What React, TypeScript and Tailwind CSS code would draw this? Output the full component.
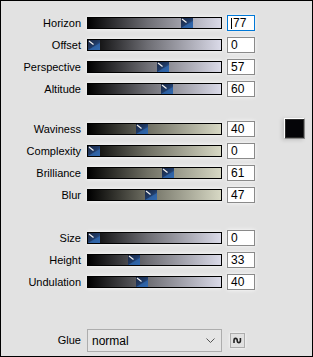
import React from "react";

type Row = { label: string; value: number; tone: "cool" | "warm"; focused?: boolean };

const group1: Row[] = [
  { label: "Horizon", value: 77, tone: "cool", focused: true },
  { label: "Offset", value: 0, tone: "cool" },
  { label: "Perspective", value: 57, tone: "cool" },
  { label: "Altitude", value: 60, tone: "cool" },
];

const group2: Row[] = [
  { label: "Waviness", value: 40, tone: "warm" },
  { label: "Complexity", value: 0, tone: "warm" },
  { label: "Brilliance", value: 61, tone: "warm" },
  { label: "Blur", value: 47, tone: "warm" },
];

const group3: Row[] = [
  { label: "Size", value: 0, tone: "cool" },
  { label: "Height", value: 33, tone: "cool" },
  { label: "Undulation", value: 40, tone: "cool" },
];

function Thumb({ value }: { value: number }) {
  // inner track is 133px wide, thumb 12px
  const left = Math.round((value / 100) * 121);
  return (
    <svg
      className="absolute top-0"
      style={{ left }}
      width="12"
      height="10"
      viewBox="0 0 12 10"
    >
      <defs>
        <linearGradient id="thumbFill" x1="0" y1="0" x2="1" y2="1">
          <stop offset="0" stopColor="#1a2640" />
          <stop offset="0.5" stopColor="#1f3a66" />
          <stop offset="1" stopColor="#3a74bc" />
        </linearGradient>
      </defs>
      <rect x="0" y="0" width="12" height="10" fill="url(#thumbFill)" />
      <polygon points="0,10 12,10 12,3" fill="#2f66ad" opacity="0.8" />
      <line x1="1" y1="1" x2="5.5" y2="4.5" stroke="#f2f2f2" strokeWidth="1.2" />
    </svg>
  );
}

function SliderRow({ row, extra }: { row: Row; extra?: React.ReactNode }) {
  const track =
    row.tone === "cool"
      ? "bg-[linear-gradient(to_right,#000000,#6e6e74_45%,#dadae8)]"
      : "bg-[linear-gradient(to_right,#000000,#707064_45%,#d7d8c4)]";
  return (
    <div className="flex h-[22px] items-center">
      <div className="w-[80px] text-right text-[11px] leading-none text-black">{row.label}</div>
      <div className={`relative ml-[6px] h-[12px] w-[135px] border border-black shadow-[0_0_4px_rgba(255,255,255,0.9)] ${track}`}>
        <Thumb value={row.value} />
      </div>
      <div
        className={`ml-[5px] flex h-[16px] w-[28px] items-center bg-white pl-[3px] text-[12px] leading-none text-black shadow-[0_0_4px_rgba(255,255,255,0.9)] ${
          row.focused ? "border border-[#0078d7]" : "border border-[#8a8a8a]"
        }`}
      >
        {row.focused && <span className="mr-[1px] h-[11px] w-px bg-black" />}
        {row.value}
      </div>
      {extra}
    </div>
  );
}

export default function App() {
  return (
    <div className="h-[357px] w-[313px] border border-black bg-[#e2e2e2] font-['Liberation_Sans',Arial,sans-serif]">
      <div className="flex flex-col pt-[11px]">
        {group1.map((r) => (
          <SliderRow key={r.label} row={r} />
        ))}
      </div>
      <div className="mt-[18px] flex flex-col">
        {group2.map((r, i) => (
          <SliderRow
            key={r.label}
            row={r}
            extra={
              i === 0 ? (
                <div className="mb-[2px] ml-[29px] h-[21px] w-[21px] border border-t-white border-l-white border-r-[#8a8a8a] border-b-[#8a8a8a] bg-black shadow-[-2px_1px_4px_rgba(0,0,0,0.15)]">
                  <div className="h-full w-full border border-[#2a2a2a] bg-[#050508]" />
                </div>
              ) : null
            }
          />
        ))}
      </div>
      <div className="mt-[21px] flex flex-col">
        {group3.map((r) => (
          <SliderRow key={r.label} row={r} />
        ))}
      </div>
      <div className="mt-[36px] flex items-center">
        <div className="w-[80px] text-right text-[11px] leading-none text-black">Glue</div>
        <div className="ml-[6px] flex h-[23px] w-[135px] items-center justify-between border border-[#adadad] bg-[#e5e5e5] pl-[4px] pr-[6px] text-[12px] text-black">
          <span>normal</span>
          <svg width="9" height="6" viewBox="0 0 9 6">
            <polyline points="0.5,0.5 4.5,4.5 8.5,0.5" fill="none" stroke="#555" strokeWidth="1" />
          </svg>
        </div>
        <div className="ml-[8px] flex h-[15px] w-[15px] items-center justify-center border border-[#adadad] bg-[#e1e1e1] shadow-[0_0_3px_rgba(255,255,255,0.9)]">
          <svg width="9" height="7" viewBox="0 0 9 7">
            <path
              d="M1 6 V3 a1.6 1.6 0 0 1 3.2 0 V4 a1.6 1.6 0 0 0 3.2 0 V1"
              fill="none"
              stroke="#222"
              strokeWidth="1.6"
            />
          </svg>
        </div>
      </div>
    </div>
  );
}
